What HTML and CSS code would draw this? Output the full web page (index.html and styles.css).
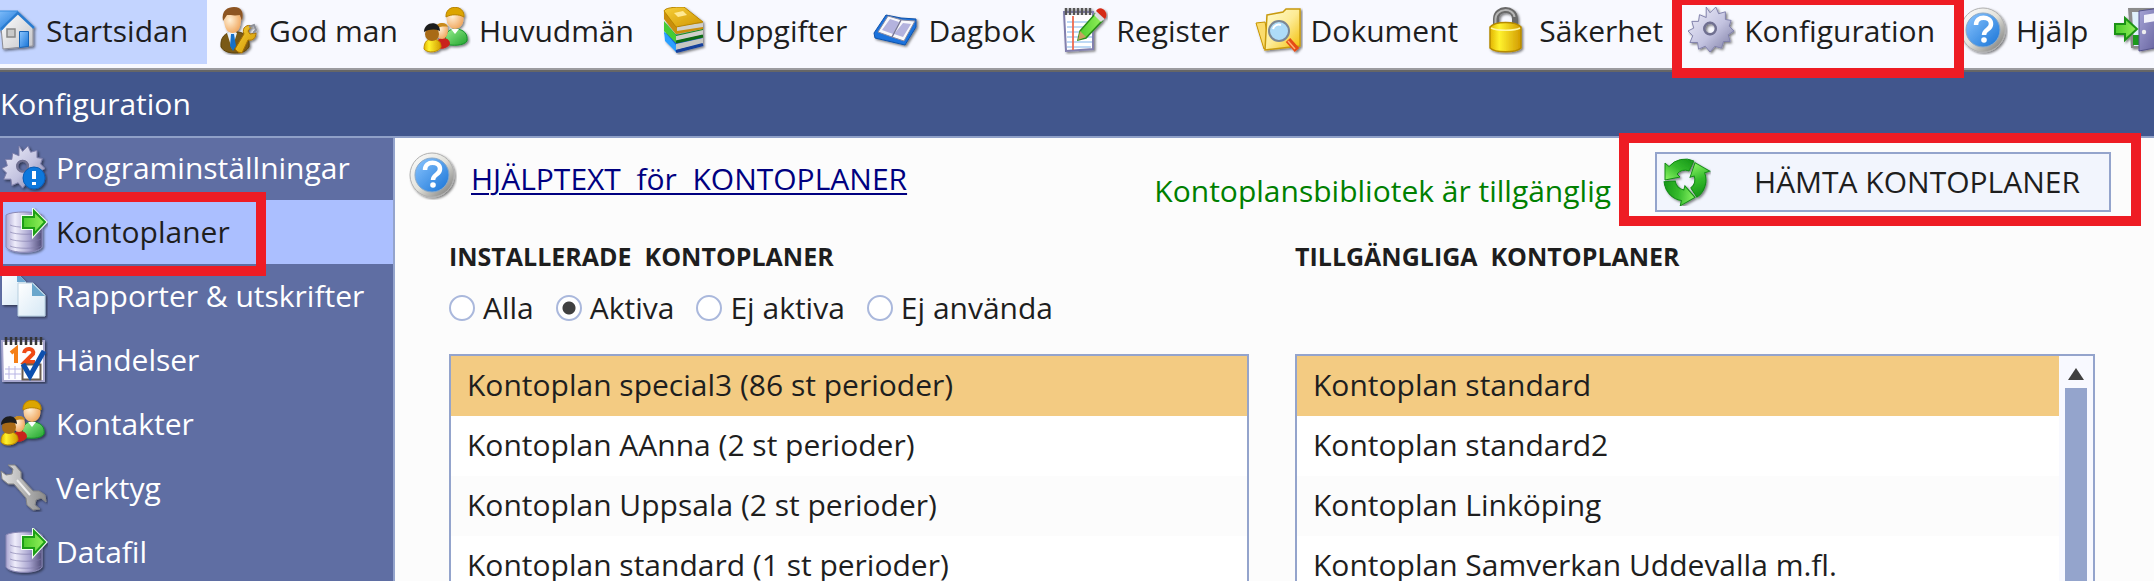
FILE: index.html
```html
<!DOCTYPE html>
<html lang="sv">
<head>
<meta charset="utf-8">
<meta name="viewport" content="width=device-width, initial-scale=1">
<title>Konfiguration – Kontoplaner</title>
<link rel="stylesheet" href="styles.css">
</head>
<body>
<svg class="sprite" width="0" height="0" aria-hidden="true">
  <defs>
    <linearGradient id="gBlue" x1="0" y1="0" x2="1" y2="1"><stop offset="0" stop-color="#8cc6ff"/><stop offset="1" stop-color="#1773d6"/></linearGradient>
    <linearGradient id="gWall" x1="0" y1="0" x2="1" y2="1"><stop offset="0" stop-color="#fff"/><stop offset="1" stop-color="#c4c4c8"/></linearGradient>
    <linearGradient id="gGold" x1="0" y1="0" x2="1" y2="1"><stop offset="0" stop-color="#f7cf3a"/><stop offset="1" stop-color="#cf9500"/></linearGradient>
    <linearGradient id="gLock" x1="0" y1="0" x2="1" y2="0"><stop offset="0" stop-color="#e2b400"/><stop offset=".3" stop-color="#fff32e"/><stop offset="1" stop-color="#d29a00"/></linearGradient>
    <linearGradient id="gGreen" x1="0" y1="0" x2="1" y2="1"><stop offset="0" stop-color="#9af090"/><stop offset="1" stop-color="#1fa32c"/></linearGradient>
    <linearGradient id="gArrow" x1="0" y1="0" x2="1" y2="0"><stop offset="0" stop-color="#4bcb2a"/><stop offset="1" stop-color="#93f05c"/></linearGradient>
    <linearGradient id="gRecycle" x1="1" y1="0" x2="0" y2="1"><stop offset="0" stop-color="#149316"/><stop offset=".5" stop-color="#35bb2c"/><stop offset="1" stop-color="#8cf566"/></linearGradient>
    <linearGradient id="gGear" x1="0" y1="0" x2="1" y2="1"><stop offset="0" stop-color="#f0f0fb"/><stop offset=".55" stop-color="#c3c3e0"/><stop offset="1" stop-color="#77779f"/></linearGradient>
    <linearGradient id="gDisk" x1="0" y1="0" x2="1" y2="0"><stop offset="0" stop-color="#a9a5d0"/><stop offset=".25" stop-color="#efedfb"/><stop offset=".65" stop-color="#a8a4cf"/><stop offset="1" stop-color="#4f4c78"/></linearGradient>
    <linearGradient id="gFolder" x1="0" y1="0" x2="1" y2="1"><stop offset="0" stop-color="#fffbd0"/><stop offset=".5" stop-color="#fdeb95"/><stop offset="1" stop-color="#f2bd00"/></linearGradient>
    <linearGradient id="gDoor" x1="0" y1="0" x2="1" y2="1"><stop offset="0" stop-color="#a6a4d6"/><stop offset="1" stop-color="#615e9b"/></linearGradient>
    <linearGradient id="gPage" x1="0" y1="0" x2="1" y2="1"><stop offset="0" stop-color="#fff"/><stop offset="1" stop-color="#d5e8f5"/></linearGradient>
    <linearGradient id="gSteel" x1="0" y1="0" x2="1" y2="0"><stop offset="0" stop-color="#e3e3e3"/><stop offset="1" stop-color="#8a8a8a"/></linearGradient>
    <linearGradient id="gRing" x1="0" y1="0" x2="1" y2="1"><stop offset="0" stop-color="#fff"/><stop offset=".5" stop-color="#e2e2dc"/><stop offset="1" stop-color="#6e6e6e"/></linearGradient>
    <radialGradient id="gSkin" cx=".35" cy=".35" r=".8"><stop offset="0" stop-color="#fff1d8"/><stop offset="1" stop-color="#ee9c4c"/></radialGradient>
    <filter id="soft" x="-20%" y="-20%" width="150%" height="150%"><feDropShadow dx="1.5" dy="1.5" stdDeviation="1" flood-color="#000" flood-opacity=".5"/></filter>

    <symbol id="home" viewBox="0 0 48 48"><g filter="url(#soft)">
      <path d="M11 20 28 6 43 20 43 39 13 42Z" fill="url(#gWall)" stroke="#8d8d95"/>
      <path d="M8 4H28L12 23 3 22Z" fill="url(#gBlue)" stroke="#3a8ee0"/>
      <path d="M11 22 28 6 44 21" fill="none" stroke="#2b7cd0" stroke-width="2.4"/>
      <path d="M17 22h8v8h-8z" fill="#c9c9c9" stroke="#888" stroke-width="1.5"/>
      <path d="M29.5 24.5h9v15l-9 1z" fill="url(#gBlue)" stroke="#1763b5"/></g></symbol>

    <symbol id="guardian" viewBox="0 0 48 48"><g filter="url(#soft)">
      <path d="M8 40C7 29 13 26 19 25h6c8 1 12 6 11 15-4 6-9 6-14 6S11 45 8 40Z" fill="#7a5a12" stroke="#5c4108"/>
      <path d="M14 26l5 16 5-16-5-3z" fill="#e8f0fa"/><path d="M18 27h3l2 12-3 5-3-5z" fill="#1670c8"/>
      <path d="M11 12C11 4 28 4 28 12c0 8-3 14-8.500 14S11 20 11 12Z" fill="url(#gSkin)"/>
      <path d="M10 14C8 3 15 0 21 0c8 0 10 6 8 14l-2-6c-5 1-10 0-13 0z" fill="#8d5523"/>
      <path d="M25 45l-3-3 9-15c-3-7 4-10 8-8l-4 5 2 3 6-1c0 5-3 8-8 7l-6 13z" fill="url(#gGold)" stroke="#a87000"/>
      <path d="M36 20l5-2 2 5-3 3" fill="none" stroke="#8c8f98" stroke-width="2"/></g></symbol>

    <symbol id="people" viewBox="0 0 48 48"><g filter="url(#soft)">
      <path d="M22 37c0-12 4-15 10-15 9 0 13 5 12 12-3 5-15 5-22 3Z" fill="url(#gGreen)" stroke="#15902a"/>
      <path d="M28 22l4 5 4-5z" fill="#fff"/>
      <ellipse cx="32" cy="12" rx="8.5" ry="10" fill="url(#gSkin)"/>
      <path d="M23 10C22-3 42-3 41 10c-5-3-13-3-18 0Z" fill="#dca500" stroke="#b78300"/>
      <path d="M13 41c0-8 3-10 7-10 5 0 7 3 7 6-2 4-8 6-14 4Z" fill="#c9241b"/>
      <ellipse cx="19" cy="24" rx="6" ry="8" fill="url(#gSkin)"/>
      <path d="M12 21c1-6 12-7 13-1-4-1-8 0-13 1Z" fill="#c98a1c"/>
      <path d="M1 42c0-8 4-10 8-10 6 0 9 3 9 8-2 5-13 7-17 2Z" fill="url(#gLock)" stroke="#c09000"/>
      <ellipse cx="9" cy="27" rx="7" ry="7" fill="#a86b12"/>
      <path d="M1 25c0-11 16-12 16-1-5-2-10-2-16 1Z" fill="#1d1d1d"/></g></symbol>

    <symbol id="books" viewBox="0 0 48 48"><g filter="url(#soft)">
      <path d="M5 26l12 19 27-7v-7z" fill="#1b5ed0"/><path d="M17 37l27-6v6l-27 6z" fill="#c6c6c2"/><path d="M5 24l12 14v7L6 34z" fill="#2aa0ff"/><path d="M17 44.500l27-7" stroke="#123f9c" stroke-width="3"/>
      <path d="M5 15l12 13 27-6v8l-27 6z" fill="#178a1c"/><path d="M17 29l27-6v5l-27 6z" fill="#cfcfcb"/><path d="M5 14l12 14v8L5 24z" fill="#45cc35"/><path d="M17 35l27-6" stroke="#0c6b15" stroke-width="3"/>
      <path d="M5 4l12 15 27-3v6l-27 5L5 12z" fill="#c98e08"/><path d="M18 19l26-3v4l-26 4z" fill="#d0d0ca"/>
      <path d="M5 4C6 1 14 0 25 0L44 15 17 20z" fill="url(#gGold)" stroke="#b98600"/><path d="M15 6l9-2 4 4-9 2z" fill="#ffe992"/></g></symbol>

    <symbol id="diary" viewBox="0 0 48 48"><g filter="url(#soft)">
      <path d="M2 26L14 8l15 3 15 1v8L33 38 3 31Z" fill="#1b73dd" stroke="#1253aa"/>
      <path d="M6 25L16 9l14 4 13 1-11 20-12-4z" fill="#f8f8fb" stroke="#8a8aa0"/>
      <path d="M18 12l9 3-6 12-11-4zM31 16l8 1-8 13-9-3z" fill="#b4b3de"/><path d="M29 13L20 30" stroke="#777797" stroke-width="1.5"/></g></symbol>

    <symbol id="notepad" viewBox="0 0 48 48"><g filter="url(#soft)">
      <path d="M4 5h29v37L6 44Z" fill="#fff" stroke="#8280ae" stroke-width="2"/>
      <path d="M7 15h25M7 20h25M7 25h25M7 30h25M7 35h25M7 40h24" stroke="#a9cdf2" stroke-width="1.5"/><path d="M13 9v34" stroke="#ee6a50" stroke-width="1.800"/>
      <path d="M6 1v7M10 1v7M14 1v7M18 1v7M22 1v7M26 1v7M30 1v7" stroke="#555" stroke-width="2.5"/>
      <path d="M20 24L35 7l7 7-16 17-8 2z" fill="url(#gArrow)" stroke="#278d16" stroke-width="1.5"/><path d="M20 24l6 6-8 3z" fill="#c9a060"/><path d="M34 8l3-3 7 7-3 3z" fill="#ddd"/>
      <path d="M36 4c4-7 14 1 9 8z" fill="#d52a18"/></g></symbol>

    <symbol id="folder" viewBox="0 0 48 48"><g filter="url(#soft)">
      <path d="M1 16l9-1 4 22-5 5Z" fill="#fbdc6d" stroke="#c79500"/>
      <path d="M12 8l16-3 3-3h14v37L10 43Z" fill="url(#gFolder)" stroke="#c89a10" stroke-width="1.5"/>
      <circle cx="24" cy="24" r="10" fill="#aedcf8" stroke="#7b8794" stroke-width="2"/><path d="M18 22c1-4 5-5 8-4" stroke="#fff" stroke-width="2" fill="none"/>
      <path d="M33 33l9 10" stroke="#e54c16" stroke-width="6"/><path d="M33 34l7 8" stroke="#ffb070" stroke-width="1.5"/></g></symbol>

    <symbol id="lock" viewBox="0 0 48 48"><g filter="url(#soft)">
      <path d="M13 22V12c0-12 19-12 19 0v10" fill="none" stroke="#696969" stroke-width="6"/><path d="M12.500 22V12c0-11 18-12 19-2" fill="none" stroke="#b5b5b5" stroke-width="2"/>
      <path d="M7 20c5-6 26-6 31 0v21c-5 5-26 5-31 0Z" fill="url(#gLock)" stroke="#b58a00" stroke-width="1.5"/><path d="M8 21c6 3 24 3 29 0" fill="none" stroke="#fff6a0" stroke-width="1.5"/></g></symbol>

    <symbol id="gearshape" viewBox="0 0 48 48">
      <path fill-rule="evenodd" d="M19 0l4 6 6-6 3 7 7-2v8l6 1-2 6 5 5-6 4 2 7-7 0-2 7-7-2-5 6-5-6-7 3-1-7-8 0 3-7-5-5 6-3-2-7 7 0 1-7 7 3Zm3.500 16a6.500 6.500 0 1 0 1 0Z" fill="url(#gGear)" stroke="#8080aa"/>
      <circle cx="23" cy="22.500" r="6" fill="none" stroke="#6f6f90" stroke-width="2.5"/></symbol>
    <symbol id="gear" viewBox="0 0 48 48"><g filter="url(#soft)"><use href="#gearshape" width="46" height="46"/></g></symbol>

    <symbol id="help" viewBox="0 0 48 48"><g filter="url(#soft)">
      <circle cx="23" cy="23" r="22" fill="url(#gRing)" stroke="#b0b0b0"/><circle cx="23" cy="23" r="17" fill="url(#gBlue)" stroke="#8aa9c8"/>
      <path d="M16 18c0-10 15-9 15-1 0 6-7 5-7 11" fill="none" stroke="#fff" stroke-width="4.500"/><circle cx="24" cy="33" r="2.800" fill="#fff"/></g></symbol>

    <symbol id="exit" viewBox="0 0 48 48"><g filter="url(#soft)">
      <path d="M15 1h32v40H18Z" fill="#8b8b8b"/><path d="M19 5h20v34H21Z" fill="#dff0fb"/><path d="M20 28h8v10h-8z" fill="#1d9a1a"/>
      <path d="M26 4l21-3v39l-21 4Z" fill="url(#gDoor)" stroke="#56548c"/><path d="M31 8l12-2v8l-12 2z" fill="#f1f1fb"/><circle cx="31" cy="25" r="2.200" fill="#eee"/>
      <path d="M2 17h10v-6l12 11-12 11v-6H2Z" fill="url(#gArrow)" stroke="#1c9216" stroke-width="2"/></g></symbol>

    <symbol id="gearinfo" viewBox="0 0 48 48"><g filter="url(#soft)"><use href="#gearshape" x="2" y="2" width="43" height="43"/>
      <circle cx="34" cy="34" r="11" fill="#0878dc" stroke="#0a5cb5"/><path d="M34 27v8" stroke="#fff" stroke-width="4"/><path d="M32 38h4v3h-4z" fill="#fff"/></g></symbol>

    <symbol id="database" viewBox="0 0 48 48"><g filter="url(#soft)">
      <path d="M6 7c5-4 31-4 36 0v32c-4 7-32 7-36 0Z" fill="url(#gDisk)" stroke="#8b88b5"/>
      <path d="M10 17c6 3 26 3 31 0M10 24c6 3 26 3 31 0M10 31c6 3 26 3 31 0M10 38c6 3 26 3 31 0" fill="none" stroke="#7e7aa8" stroke-opacity=".6"/>
      <path d="M23 9h11V3l11 11-11 12v-6H23Z" fill="url(#gArrow)" stroke="#f1fff0" stroke-width="4"/><path d="M23 9h11V3l11 11-11 12v-6H23Z" fill="url(#gArrow)" stroke="#1d9e16" stroke-width="2"/></g></symbol>

    <symbol id="pages" viewBox="0 0 48 48"><g filter="url(#soft)">
      <path d="M2 1h15l9 9v23H2Z" fill="url(#gPage)"/><path d="M17 1l9 9h-9z" fill="#6aa5d0"/>
      <path d="M18 11h15l12 12v21H18Z" fill="url(#gPage)" stroke="#b7cfdf"/><path d="M32 11l13 13H32z" fill="#69a6cc"/></g></symbol>

    <symbol id="calendar" viewBox="0 0 48 48"><g filter="url(#soft)">
      <path d="M2 5h42v40H3Z" fill="#fdfdff" stroke="#a7a6ce" stroke-width="2"/>
      <path d="M6 1v8M11 1v8M16 1v8M21 1v8M26 1v8M31 1v8M36 1v8M41 1v8" stroke="#353535" stroke-width="2.5"/>
      <path d="M5 33h16M5 38h16M9 30v13M15 30v13" stroke="#b7b4e4"/>
      <path d="M11 17l5-4v14" fill="none" stroke="#f57f17" stroke-width="4"/><path d="M24 17c1-6 11-5 9 1l-8 8h10" fill="none" stroke="#ee4a13" stroke-width="4"/>
      <path d="M22.500 28.500h18v15h-18z" fill="#fff" stroke="#6b5d50" stroke-width="2"/><path d="M23 28l7 12L44 15" fill="none" stroke="#0a50ad" stroke-width="5"/></g></symbol>

    <symbol id="wrench" viewBox="0 0 48 48"><g filter="url(#soft)">
      <path d="M8 1l7 0 6 7v6l12 13h6l6 4 1 7-5-4-5 2-1 5 5 4-7 1-6-5-1-7L14 20H8l-6-5-1-8 5 4 6-1 1-5Z" fill="url(#gSteel)" stroke="#858585"/><path d="M17 16l13 15" stroke="#efefef" stroke-width="2"/></g></symbol>

    <symbol id="recycle" viewBox="0 0 48 48"><g filter="url(#soft)" fill="url(#gRecycle)" stroke="#128a14">
      <path id="recycleArrow" d="M30.900 3A21 21 0 0 0 6 8.500L2 5v17l15-3-3-3a10 10 0 0 1 12-3Z"/>
      <use href="#recycleArrow" transform="rotate(120 22 22)"/>
      <use href="#recycleArrow" transform="rotate(240 22 22)"/></g></symbol>
  </defs>
</svg>

<nav class="topnav" aria-label="Huvudmeny">
  <a class="topnav-item is-current" href="#"><svg class="icon"><use href="#home"/></svg>Startsidan</a>
  <a class="topnav-item" href="#"><svg class="icon"><use href="#guardian"/></svg>God man</a>
  <a class="topnav-item" href="#"><svg class="icon"><use href="#people"/></svg>Huvudmän</a>
  <a class="topnav-item" href="#"><svg class="icon"><use href="#books"/></svg>Uppgifter</a>
  <a class="topnav-item" href="#"><svg class="icon"><use href="#diary"/></svg>Dagbok</a>
  <a class="topnav-item" href="#"><svg class="icon"><use href="#notepad"/></svg>Register</a>
  <a class="topnav-item" href="#"><svg class="icon"><use href="#folder"/></svg>Dokument</a>
  <a class="topnav-item" href="#"><svg class="icon"><use href="#lock"/></svg>Säkerhet</a>
  <a class="topnav-item marked marked-nav" href="#"><svg class="icon"><use href="#gear"/></svg>Konfiguration</a>
  <a class="topnav-item" href="#"><svg class="icon"><use href="#help"/></svg>Hjälp</a>
  <a class="topnav-item" href="#" aria-label="Avsluta"><svg class="icon"><use href="#exit"/></svg></a>
</nav>

<header class="titlebar"><h1 class="title">Konfiguration</h1></header>

<div class="shell">
  <nav class="sidebar" aria-label="Konfiguration">
    <a class="side-item" href="#"><svg class="icon"><use href="#gearinfo"/></svg>Programinställningar</a>
    <a class="side-item is-active marked marked-side" href="#"><svg class="icon"><use href="#database"/></svg>Kontoplaner</a>
    <a class="side-item" href="#"><svg class="icon"><use href="#pages"/></svg>Rapporter &amp; utskrifter</a>
    <a class="side-item" href="#"><svg class="icon"><use href="#calendar"/></svg>Händelser</a>
    <a class="side-item" href="#"><svg class="icon"><use href="#people"/></svg>Kontakter</a>
    <a class="side-item" href="#"><svg class="icon"><use href="#wrench"/></svg>Verktyg</a>
    <a class="side-item" href="#"><svg class="icon"><use href="#database"/></svg>Datafil</a>
  </nav>

  <main class="content">
    <div class="toolbar">
      <svg class="icon"><use href="#help"/></svg>
      <a class="help-link" href="#">HJÄLPTEXT  för  KONTOPLANER</a>
      <p class="status">Kontoplansbibliotek är tillgänglig</p>
      <button class="fetch marked marked-button" type="button"><svg class="icon"><use href="#recycle"/></svg><span class="fetch-label">HÄMTA KONTOPLANER</span></button>
    </div>

    <div class="columns">
      <section class="column">
        <h2 class="heading">INSTALLERADE  KONTOPLANER</h2>
        <div class="filters" role="radiogroup" aria-label="Visa kontoplaner">
          <label class="filter"><input class="radio" type="radio" name="filter">Alla</label>
          <label class="filter"><input class="radio" type="radio" name="filter" checked>Aktiva</label>
          <label class="filter"><input class="radio" type="radio" name="filter">Ej aktiva</label>
          <label class="filter"><input class="radio" type="radio" name="filter">Ej använda</label>
        </div>
        <div class="listbox">
          <ul class="rows">
            <li class="row is-selected">Kontoplan special3 (86 st perioder)</li>
            <li class="row">Kontoplan AAnna (2 st perioder)</li>
            <li class="row">Kontoplan Uppsala (2 st perioder)</li>
            <li class="row">Kontoplan standard (1 st perioder)</li>
          </ul>
        </div>
      </section>
      <section class="column">
        <h2 class="heading">TILLGÄNGLIGA  KONTOPLANER</h2>
        <div class="filters"></div>
        <div class="listbox">
          <ul class="rows">
            <li class="row is-selected">Kontoplan standard</li>
            <li class="row">Kontoplan standard2</li>
            <li class="row">Kontoplan Linköping</li>
            <li class="row">Kontoplan Samverkan Uddevalla m.fl.</li>
          </ul>
          <div class="scrollbar"><span class="scroll-up"></span><span class="scroll-thumb"></span></div>
        </div>
      </section>
    </div>
  </main>
</div>
</body>
</html>
```
FILE: styles.css
```css
*, *::after { box-sizing: border-box; }

body {
  margin: 0;
  height: 100vh;
  display: flex;
  flex-direction: column;
  overflow: hidden;
  background: #fcfcfc;
  color: #1e1e1e;
  font: 30px/40px "Open Sans", "Noto Sans", sans-serif;
}

a { color: inherit; text-decoration: none; }
h1, h2, p, ul { margin: 0; padding: 0; font-weight: 400; }

.sprite { position: absolute; }
.icon { flex: none; width: 48px; height: 48px; }

/* Top menu */
.topnav {
  flex: none;
  display: flex;
  height: 72px;
  padding-bottom: 4px;
  margin-left: -16px;
  background: #f8f9ff;
  border-bottom: 2px solid #666;
  box-shadow: inset 0 -2px #9c9ca0;
  white-space: nowrap;
}
.topnav-item {
  flex: none;
  display: flex;
  align-items: center;
  gap: 8px;
  height: 64px;
  padding: 0 19px 2px 6px;
}
.topnav-item.is-current { background: #c3d4ff; }

/* Title bar */
.titlebar {
  flex: none;
  height: 64px;
  padding-top: 12px;
  background: #41568d;
  box-shadow: 0 2px #8fa0c8;
  position: relative;
  color: #fff;
}
.title { font-size: 30px; line-height: 40px; }

.shell { flex: 1; display: flex; min-height: 0; }

/* Side menu */
.sidebar {
  flex: none;
  width: 395px;
  border-right: 2px solid #94a4cc;
  background: #5f6ea3;
  color: #fff;
}
.side-item {
  display: flex;
  align-items: center;
  gap: 8px;
  height: 64px;
}
.side-item.is-active { background: #abbfff; color: #1e1e1e; }

/* Red marker frames */
.marked { position: relative; }
.marked::after {
  content: "";
  position: absolute;
  z-index: 2;
  border: 10px solid #ee1c24;
  pointer-events: none;
}
.marked-nav::after { inset: -5px -10px -14px; }
.marked-side::after { inset: -8px auto -12px -7px; width: 273px; }
.marked-button::after { inset: -21px -32px -16px -38px; }

/* Content */
.content { flex: 1; min-width: 0; }
.toolbar {
  display: flex;
  align-items: flex-start;
  padding: 16px 43px 0 14px;
}
.help-link {
  margin: 7px 0 0 14px;
  color: #000080;
  white-space: pre;
  text-decoration: underline;
  text-decoration-thickness: 2px;
  text-underline-offset: 3px;
}
.status { margin: 19px 44px 0 auto; color: #008000; white-space: nowrap; }
.fetch {
  display: flex;
  align-items: center;
  width: 456px;
  height: 60px;
  padding: 0 0 0 6px;
  border: 2px solid #94a4cc;
  background: #f2f5fd;
  color: #1e1e1e;
  font: inherit;
}
.fetch-label { flex: 1; padding-left: 14px; text-align: center; white-space: nowrap; }

.columns {
  display: grid;
  grid-template-columns: 1fr 1fr;
  gap: 46px;
  padding: 24px 59px 0 54px;
}
.heading { font-size: 25px; font-weight: 700; line-height: 40px; white-space: pre; }
.filters { display: flex; gap: 22px; height: 40px; margin: 12px 0 26px; }
.filter { display: flex; align-items: center; gap: 8px; white-space: nowrap; }
.radio {
  appearance: none;
  width: 26px;
  height: 26px;
  margin: 0;
  border: 2px solid #aab8dc;
  border-radius: 50%;
  background: #fff;
}
.radio:checked { background: radial-gradient(circle, #404040 6px, #fff 7px); }

.listbox { display: flex; border: 2px solid #94a4cc; background: #fff; }
.rows { flex: 1; min-width: 0; list-style: none; }
.row { padding: 9px 16px 11px; white-space: nowrap; }
.row:nth-child(odd) { background: #fcfcfc; }
.row.is-selected { background: #f3cb82; }

.scrollbar {
  flex: none;
  display: flex;
  flex-direction: column;
  align-items: center;
  width: 34px;
  padding-top: 12px;
  gap: 8px;
  background: #f8f9ff;
}
.scroll-up {
  border: 8px solid transparent;
  border-top: 0;
  border-bottom: 12px solid #404040;
}
.scroll-thumb { flex: 1; width: 22px; background: #94a4cc; }
```
